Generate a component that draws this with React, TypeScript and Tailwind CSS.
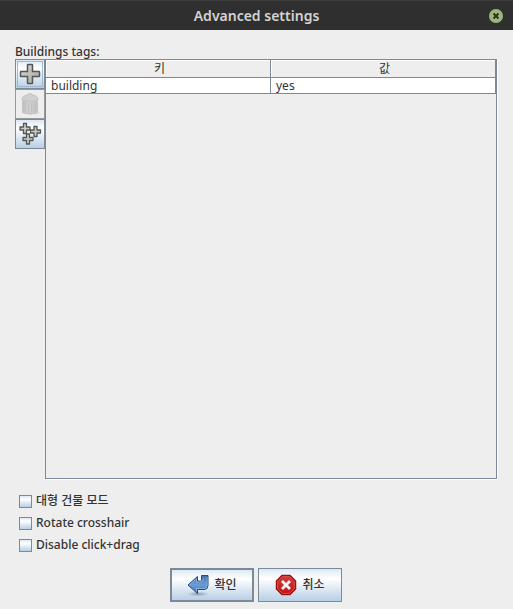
import { useState } from "react";

const TAGS = [{ key: "building", value: "yes" }];

const OPTIONS = [
  { id: "big-mode", label: "대형 건물 모드" },
  { id: "rotate", label: "Rotate crosshair" },
  { id: "click-drag", label: "Disable click+drag" },
];

const metal = "bg-linear-to-b from-[#dde8f3] via-white via-30% to-[#b8cfe5]";

function PlusIcon() {
  return (
    <svg width="24" height="24" viewBox="0 0 24 24" aria-hidden="true">
      <defs>
        <linearGradient id="plus" x1="0" y1="0" x2="1" y2="1">
          <stop offset="0" stopColor="#d8d8d4" />
          <stop offset="1" stopColor="#a5a5a1" />
        </linearGradient>
      </defs>
      <path
        d="M10 2.500h4q.5 0 .5.5v6.500h6.500q.5 0 .5.5v4q0 .5-.5.5h-6.500v6.500q0 .5-.5.5h-4q-.5 0-.5-.5v-6.500h-6.500q-.5 0-.5-.5v-4q0-.5.5-.5h6.500v-6.500q0-.5.5-.5z"
        fill="url(#plus)"
        stroke="#555753"
        strokeWidth="1.500"
      />
    </svg>
  );
}

function TrashIcon() {
  return (
    <svg width="24" height="24" viewBox="0 0 24 24" aria-hidden="true">
      <defs>
        <linearGradient id="can" x1="0" y1="0" x2="1" y2="0">
          <stop offset="0" stopColor="#bebebe" />
          <stop offset="0.4" stopColor="#d2d2d2" />
          <stop offset="1" stopColor="#c0c0c0" />
        </linearGradient>
      </defs>
      <ellipse cx="13" cy="21" rx="9" ry="1.800" fill="#e0e0e0" />
      <path d="M4.500 6V20.500Q12 23.500 19.500 20.500V6z" fill="url(#can)" stroke="#c4c4c4" />
      <path d="M7.500 10v10.500M10.500 10.500v11M13.500 10.500v11M16.500 10v10.500" stroke="#c2c2c2" />
      <path d="M4 6.500Q5 3.500 9 3l1.500-1.200h3L15 3q4 .5 5 3.500v1.500Q12 10.500 4 8z" fill="#d0d0d0" stroke="#c4c4c4" />
    </svg>
  );
}

function PlusesIcon() {
  const small = "M-1.500-5h3v3.500h3.500v3h-3.500v3.500h-3v-3.500h-3.500v-3h3.500z";
  return (
    <svg width="24" height="24" viewBox="0 0 24 24" aria-hidden="true">
      <g fill="#c8c8c4" stroke="#555753" strokeWidth="1.300" strokeLinejoin="round">
        <path d={small} transform="translate(7 6.500)" />
        <path d={small} transform="translate(17.500 9.500)" />
        <path d={small} transform="translate(10 17)" />
      </g>
    </svg>
  );
}

function OkIcon() {
  return (
    <svg width="24" height="24" viewBox="0 0 24 24" aria-hidden="true">
      <defs>
        <linearGradient id="ok" x1="0" y1="0" x2="0" y2="1">
          <stop offset="0" stopColor="#3f6fae" />
          <stop offset="0.5" stopColor="#6c9bd3" />
          <stop offset="1" stopColor="#4c7dbb" />
        </linearGradient>
        <radialGradient id="okShadow">
          <stop offset="0" stopColor="#5e7185" stopOpacity="0.6" />
          <stop offset="1" stopColor="#5e7185" stopOpacity="0" />
        </radialGradient>
      </defs>
      <ellipse cx="12" cy="21" rx="11" ry="2.500" fill="url(#okShadow)" />
      <path
        d="M15.500 2.500h6.500v10q0 4-4 4h-6.500v4L2 12l9.500-8.500v4.500h3q2 0 2-1.500h-1z"
        fill="url(#ok)"
        stroke="#204a87"
        strokeLinejoin="round"
      />
      <path d="M3.500 12 10.500 5.700V9h4q3 0 3-3.500M21 4v8.500q0 3-3 3h-7.500v3" fill="none" stroke="#8fb5e2" strokeWidth="0.800" />
    </svg>
  );
}

function CancelIcon() {
  return (
    <svg width="24" height="24" viewBox="0 0 24 24" aria-hidden="true">
      <defs>
        <linearGradient id="stop" x1="0" y1="0" x2="0" y2="1">
          <stop offset="0" stopColor="#d03a3a" />
          <stop offset="1" stopColor="#c01515" />
        </linearGradient>
      </defs>
      <path d="M8 2.500h8L21.500 8v8L16 21.500H8L2.500 16V8z" fill="#cc0000" stroke="#9c1010" strokeWidth="1.500" />
      <path d="M8.400 3.600h7.200l4.800 4.800v7.200l-4.800 4.800H8.400l-4.800-4.800V8.400z" fill="url(#stop)" stroke="#dc5a5a" strokeWidth="0.800" />
      <path d="m9 9 6 6m0-6-6 6" stroke="#f3f3f3" strokeWidth="2.800" strokeLinecap="square" />
    </svg>
  );
}

export default function App() {
  const [checked, setChecked] = useState<Record<string, boolean>>({});

  return (
    <div className="flex min-h-screen flex-col bg-[#eeeeee] font-['Noto_Sans','Noto_Sans_CJK_KR',sans-serif] text-xs text-[#333333]">
      <header className="grid h-[30px] grid-cols-[1fr_auto_1fr] items-center border-t border-[#3c3c3c] bg-[#2f2f2f] px-[10px]">
        <h1 className="col-start-2 text-sm font-semibold text-[#d3d3d3]">Advanced settings</h1>
        <button aria-label="Close" className="justify-self-end">
          <svg width="14" height="14" viewBox="0 0 14 14" aria-hidden="true">
            <circle cx="7" cy="7" r="7" fill="#9ab87c" />
            <path d="m4.500 4.500 5 5m0-5-5 5" stroke="#2f2f2f" strokeWidth="2" />
          </svg>
        </button>
      </header>

      <main className="flex flex-1 flex-col px-[15px] pt-[14px] pb-[7px]">
        <h2 className="h-[15px] font-medium leading-4">Buildings tags:</h2>
        <div className="flex flex-1">
          <div className="flex w-[30px] flex-col">
            <button aria-label="Add" className={`flex size-[30px] items-center justify-center border border-[#7a8a99] ${metal}`}>
              <span className="flex size-[26px] items-center justify-center border border-[#a3b8cc]">
                <PlusIcon />
              </span>
            </button>
            <button aria-label="Delete" disabled className="flex size-[30px] items-center justify-center border border-[#999999]">
              <TrashIcon />
            </button>
            <button aria-label="Add multiple" className={`flex size-[30px] items-center justify-center border border-[#7a8a99] ${metal}`}>
              <PlusesIcon />
            </button>
          </div>

          <div className="mr-px flex-1 border border-[#7a8a99] shadow-[1px_1px_0_white]">
            <table className="w-full table-fixed border-separate border-spacing-0">
              <thead>
                <tr>
                  <th className="h-[18px] border-r border-b border-[#7a8a99] py-0 pr-0 pl-[3px] font-normal leading-4 shadow-[inset_1px_1px_0_white]">키</th>
                  <th className="h-[18px] border-r border-b border-[#7a8a99] py-0 pr-0 pl-[3px] font-normal leading-4 shadow-[inset_1px_1px_0_white]">값</th>
                </tr>
              </thead>
              <tbody>
                {TAGS.map((tag) => (
                  <tr key={tag.key} className="bg-white">
                    <td className="h-4 border-r border-b border-[#7a8a99] py-0 pr-0 pl-[5px] leading-[15px]">{tag.key}</td>
                    <td className="h-4 border-r border-b border-[#7a8a99] py-0 pr-0 pl-[5px] leading-[15px]">{tag.value}</td>
                  </tr>
                ))}
              </tbody>
            </table>
          </div>
        </div>

        <div className="mt-[11px] flex flex-col pl-1 font-medium">
          {OPTIONS.map((option) => (
            <label key={option.id} htmlFor={option.id} className="flex h-[22px] items-center gap-1">
              <input
                id={option.id}
                type="checkbox"
                checked={!!checked[option.id]}
                onChange={(e) => setChecked({ ...checked, [option.id]: e.target.checked })}
                className={`size-[13px] appearance-none border border-[#7a8a99] checked:bg-[#7a8a99] ${metal}`}
              />
              {option.label}
            </label>
          ))}
        </div>

        <div className="mt-3 mr-[2px] flex justify-center gap-1 font-medium">
          <button className={`flex h-[34px] w-[84px] items-center justify-center gap-1 border-2 border-[#7a8a99] ${metal}`}>
            <OkIcon />
            확인
          </button>
          <button className={`flex h-[34px] w-[84px] items-center justify-center gap-1 border border-[#7a8a99] ${metal}`}>
            <CancelIcon />
            취소
          </button>
        </div>
      </main>
    </div>
  );
}
